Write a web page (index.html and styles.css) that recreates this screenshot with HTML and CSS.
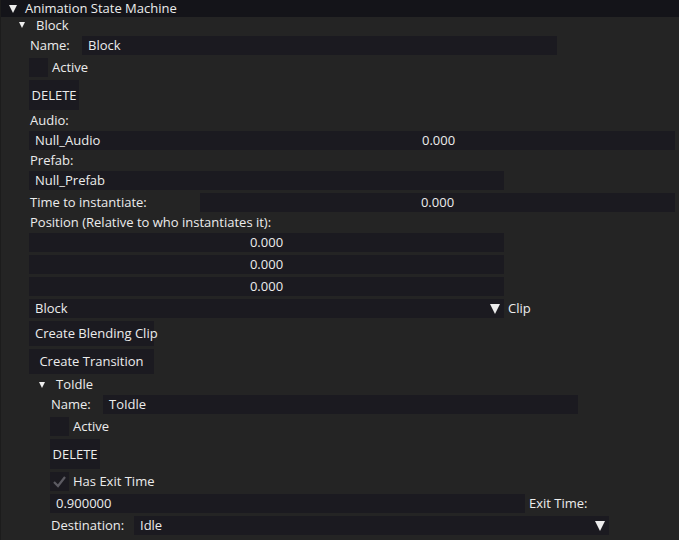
FILE: index.html
```html
<!DOCTYPE html>
<html>
<head>
<meta charset="utf-8">
<link rel="stylesheet" href="styles.css">
</head>
<body>
<div class="panel">
  <div class="header"><span class="tri big"></span><span class="htext">Animation State Machine</span></div>
  <div class="content">
    <div class="node n1"><span class="tri small"></span><span>Block</span></div>
    <div class="indent1 col">
      <div class="row"><span class="lbl name">Name:</span><div class="field w475"><span class="ftext">Block</span></div></div>
      <div class="row"><span class="cb"></span><span class="cblbl">Active</span></div>
      <div class="row"><button class="btn del">DELETE</button></div>
      <div class="lblrow">Audio:</div>
      <div class="row"><div class="field w646 rel"><span class="ftext">Null_Audio</span><span class="val audio">0.000</span></div></div>
      <div class="lblrow">Prefab:</div>
      <div class="row"><div class="field w475"><span class="ftext">Null_Prefab</span></div></div>
      <div class="row"><span class="lbl time">Time to instantiate:</span><div class="field w475 center">0.000</div></div>
      <div class="lblrow">Position (Relative to who instantiates it):</div>
      <div class="row"><div class="field w475 center">0.000</div></div>
      <div class="row"><div class="field w475 center">0.000</div></div>
      <div class="row"><div class="field w475 center">0.000</div></div>
      <div class="row"><div class="field w475 combo"><span class="ftext">Block</span><span class="tri arrow"></span></div><span class="after">Clip</span></div>
      <div class="row"><button class="btn wide left">Create Blending Clip</button></div>
      <div class="row"><button class="btn wide">Create Transition</button></div>
      <div class="node n2"><span class="tri small"></span><span>ToIdle</span></div>
      <div class="indent2 col">
        <div class="row"><span class="lbl name">Name:</span><div class="field w475"><span class="ftext">ToIdle</span></div></div>
        <div class="row"><span class="cb"></span><span class="cblbl">Active</span></div>
        <div class="row"><button class="btn del">DELETE</button></div>
        <div class="row"><span class="cb"><svg class="check" width="19" height="19" viewBox="0 0 19 19"><path d="M4 10 L8 14 L15 5" fill="none" stroke="#5c5b62" stroke-width="2.2"/></svg></span><span class="cblbl">Has Exit Time</span></div>
        <div class="row"><div class="field w475"><span class="ftext">0.900000</span></div><span class="after">Exit Time:</span></div>
        <div class="row"><span class="lbl dest">Destination:</span><div class="field w475 combo"><span class="ftext">Idle</span><span class="tri arrow"></span></div></div>
      </div>
    </div>
  </div>
</div>
</body>
</html>
```

FILE: styles.css
```css
* { box-sizing: border-box; }
html, body { margin: 0; padding: 0; background: #242424; }
body {
  font-family: "Open Sans", "Liberation Sans", sans-serif;
  font-size: 13px;
  color: #ececec;
  width: 679px;
  height: 540px;
  overflow: hidden;
}
.panel {
  height: 540px;
  border-left: 1px solid #1c1c1c;
}
.header {
  height: 17px;
  background: #141419;
  display: flex;
  align-items: center;
  padding-left: 8px;
}
.htext { margin-left: 8px; line-height: 17px; padding-bottom: 1px; }
.tri {
  display: inline-block;
  width: 0; height: 0;
  border-left-style: solid; border-right-style: solid; border-top-style: solid;
  border-left-color: transparent; border-right-color: transparent; border-top-color: #ececec;
}
.tri.big { border-left-width: 4.5px; border-right-width: 4.5px; border-top-width: 8px; }
.tri.small { border-left-width: 3px; border-right-width: 3px; border-top-width: 6px; }
.tri.arrow { border-left-width: 5.5px; border-right-width: 5.5px; border-top-width: 10px; }
.content { display: flex; flex-direction: column; }
.col { display: flex; flex-direction: column; gap: 3px; }
.node { display: flex; align-items: center; height: 16px; }
.node span:last-child { padding-bottom: 1px; }
.node.n1 { padding-left: 18px; margin-bottom: 3px; }
.node.n1 span:last-child { margin-left: 11px; }
.node.n2 { padding-left: 10px; height: 15px; }
.node.n2 span:last-child { margin-left: 11px; }
.indent1 { padding-left: 28px; }
.indent2 { padding-left: 21px; }
.row { display: flex; align-items: center; height: 19px; }
.row > span:not(.cb), .field > span:not(.tri), .field.center { padding-bottom: 1px; }
.lblrow { height: 15px; line-height: 14px; padding-left: 1px; }
.lbl { padding-left: 1px; white-space: nowrap; }
.lbl.name { width: 53px; }
.lbl.time { width: 171px; }
.lbl.dest { width: 84px; }
.field {
  height: 19px;
  background: #1b1a20;
  display: flex;
  align-items: center;
  white-space: nowrap;
}
.w475 { width: 475px; }
.w646 { width: 646px; }
.ftext { padding-left: 6px; }
.field.center { justify-content: center; }
.rel { position: relative; }
.val.audio { position: absolute; left: 393px; }
.combo { justify-content: space-between; padding-right: 4px; }
.after { margin-left: 4px; white-space: nowrap; }
.cb { width: 19px; height: 19px; background: #1b1a20; display: inline-block; }
.check { display: block; }
.cblbl { margin-left: 4px; }
.btn {
  font: inherit;
  color: inherit;
  background: #1b1a20;
  border: none;
  padding: 0 0 1px 0;
  margin: 0;
  white-space: nowrap;
}
.btn.del { width: 50px; height: 30px; }
.row:has(.btn.del) { height: 30px; }
.btn.wide { width: 125px; height: 25px; }
.btn.wide.left { text-align: left; padding-left: 6px; }
.row:has(.btn.wide) { height: 25px; }
```
